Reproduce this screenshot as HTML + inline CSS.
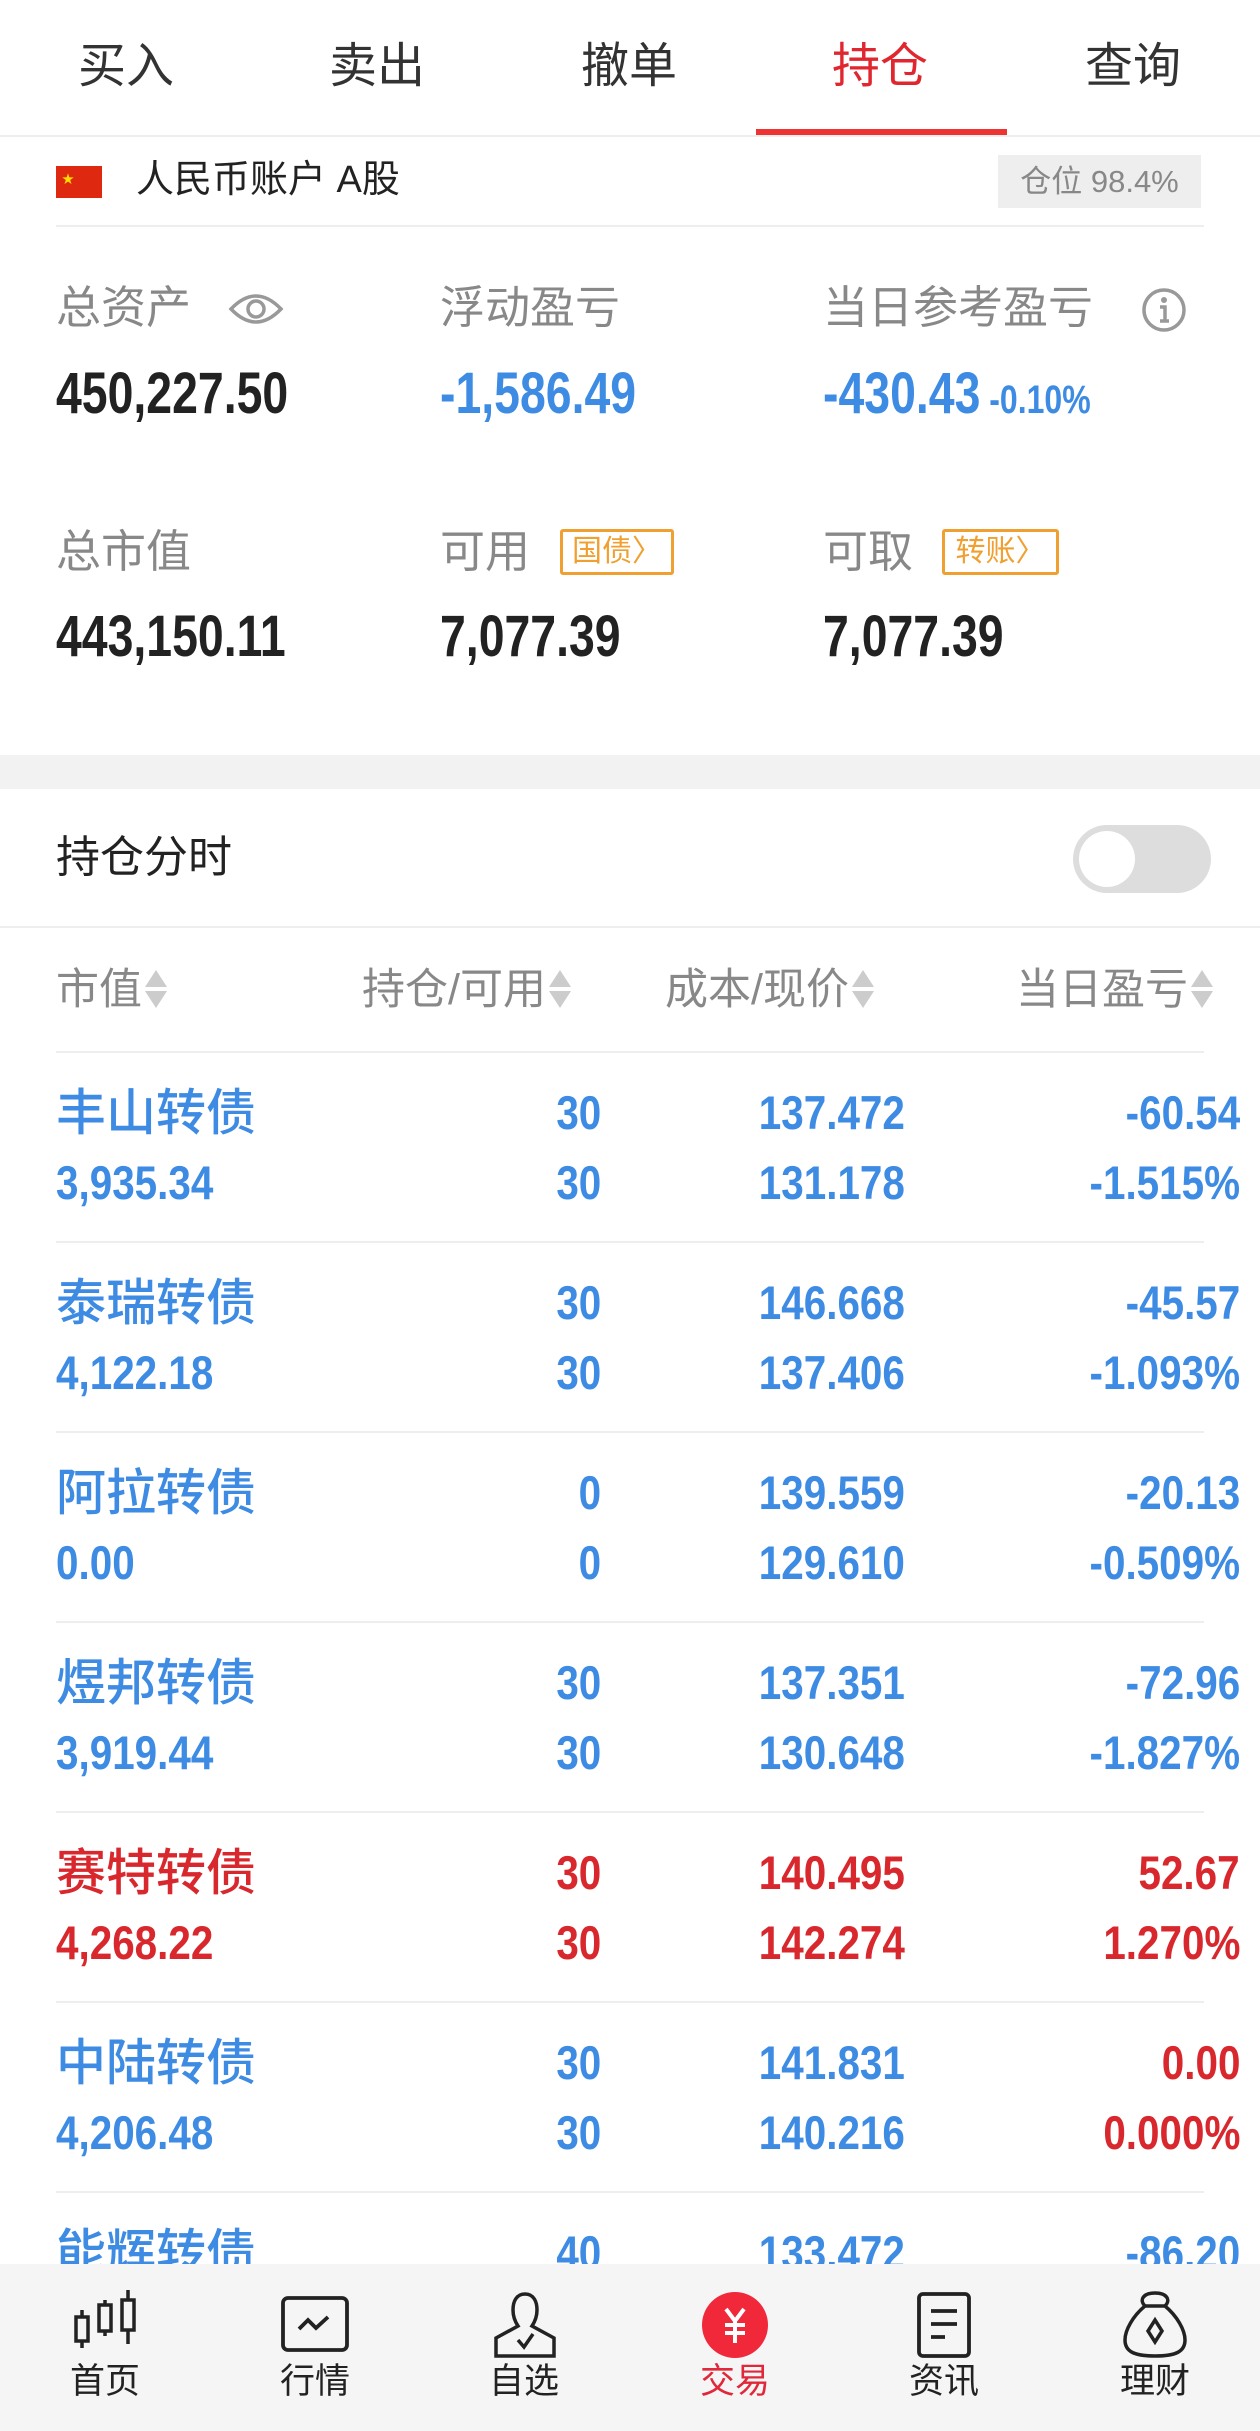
<!DOCTYPE html>
<html><head><meta charset="utf-8"><style>
*{margin:0;padding:0;box-sizing:border-box}
body{width:1260px;height:2431px;position:relative;overflow:hidden;background:#fff;font-family:"Liberation Sans","Noto Sans CJK SC",sans-serif;}
.a{position:absolute;white-space:nowrap}
.tab{top:36px;font-size:48px;color:#333;width:200px;text-align:center;line-height:62px}
.lbl{font-size:45px;color:#888;line-height:60px}
.val{font-size:58px;color:#222;line-height:70px;font-weight:bold;transform:scaleX(0.8);transform-origin:left}
.bl{color:#3d8be3}.rd{color:#d8282e}
.n{font-size:47px;line-height:60px;font-weight:bold;transform:scaleX(0.86);transform-origin:left}
.r{text-align:right;transform-origin:right}
.sep{position:absolute;left:56px;width:1148px;height:2px;background:#eee}
.badge{position:absolute;border:3px solid #f0a030;color:#f0a030;font-size:30px;line-height:40px;text-align:center;border-radius:3px}
.th{font-size:43px;color:#888;line-height:60px;top:960px}
.th svg{vertical-align:-6px;margin-left:2px}
.nav{font-size:35px;color:#222;top:2358px;width:120px;text-align:center;line-height:48px}
.nm{font-size:50px;line-height:60px;font-weight:500}
</style></head><body>
<div class="a tab" style="left:26px">买入</div>
<div class="a tab" style="left:277px">卖出</div>
<div class="a tab" style="left:529px">撤单</div>
<div class="a tab" style="left:780px;color:#e0262f">持仓</div>
<div class="a tab" style="left:1033px">查询</div>
<div class="a" style="left:756px;top:129px;width:251px;height:6px;background:#e33"></div>
<div class="a" style="left:0;top:135px;width:1260px;height:2px;background:#eee"></div>

<div class="a" style="left:56px;top:166px;width:46px;height:32px;background:#de2910"><span style="position:absolute;left:6px;top:4px;color:#ffde00;font-size:12px">★</span></div>
<div class="a" style="left:136px;top:154px;font-size:38px;color:#222;line-height:52px">人民币账户 A股</div>
<div class="a" style="left:998px;top:155px;width:203px;height:53px;background:#eee;color:#888;font-size:31px;line-height:53px;text-align:center">仓位 98.4%</div>
<div class="sep" style="top:225px"></div>

<div class="a lbl" style="left:56px;top:278px">总资产</div>
<svg class="a" style="left:228px;top:289px" width="56" height="40" viewBox="0 0 56 40"><path d="M3 20Q28-6 53 20Q28 46 3 20Z" fill="none" stroke="#999" stroke-width="3.5"/><circle cx="28" cy="20" r="8" fill="none" stroke="#999" stroke-width="3.5"/></svg>
<div class="a lbl" style="left:440px;top:278px">浮动盈亏</div>
<div class="a lbl" style="left:823px;top:278px">当日参考盈亏</div>
<svg class="a" style="left:1141px;top:287px" width="46" height="46" viewBox="0 0 46 46"><circle cx="23" cy="23" r="20" fill="none" stroke="#999" stroke-width="3.5"/><circle cx="23" cy="13" r="3" fill="#999"/><path d="M19 20h5v14M19 34h9" stroke="#999" stroke-width="3.5" fill="none"/></svg>
<div class="a val" style="left:56px;top:359px">450,227.50</div>
<div class="a val bl" style="left:440px;top:359px">-1,586.49</div>
<div class="a val bl" style="left:823px;top:359px">-430.43<span style="font-size:40px"> -0.10%</span></div>

<div class="a lbl" style="left:56px;top:522px">总市值</div>
<div class="a lbl" style="left:440px;top:522px">可用</div>
<div class="badge" style="left:560px;top:529px;width:114px;height:46px">国债〉</div>
<div class="a lbl" style="left:823px;top:522px">可取</div>
<div class="badge" style="left:942px;top:529px;width:117px;height:46px">转账〉</div>
<div class="a val" style="left:56px;top:602px">443,150.11</div>
<div class="a val" style="left:440px;top:602px">7,077.39</div>
<div class="a val" style="left:823px;top:602px">7,077.39</div>

<div class="a" style="left:0;top:755px;width:1260px;height:34px;background:#f2f2f2"></div>
<div class="a" style="left:56px;top:828px;font-size:44px;color:#222;line-height:60px">持仓分时</div>
<div class="a" style="left:1073px;top:825px;width:138px;height:68px;border-radius:34px;background:#ddd"><div style="position:absolute;left:6px;top:6px;width:56px;height:56px;border-radius:50%;background:#fff"></div></div>
<div class="a" style="left:0;top:926px;width:1260px;height:2px;background:#eee"></div>

<div class="a th" style="left:56px">市值<svg width="24" height="42" viewBox="0 0 24 42"><path d="M12 2L23 19H1zM12 40L23 23H1z" fill="#ccc"/></svg></div>
<div class="a th" style="left:362px">持仓/可用<svg width="24" height="42" viewBox="0 0 24 42"><path d="M12 2L23 19H1zM12 40L23 23H1z" fill="#ccc"/></svg></div>
<div class="a th" style="left:665px">成本/现价<svg width="24" height="42" viewBox="0 0 24 42"><path d="M12 2L23 19H1zM12 40L23 23H1z" fill="#ccc"/></svg></div>
<div class="a th" style="left:1016px">当日盈亏<svg width="24" height="42" viewBox="0 0 24 42"><path d="M12 2L23 19H1zM12 40L23 23H1z" fill="#ccc"/></svg></div>
<div class="sep" style="top:1051px"></div>

<div class="a bl nm" style="left:56px;top:1083px">丰山转债</div>
<div class="a n bl" style="left:56px;top:1153px">3,935.34</div>
<div class="a n bl r" style="right:659px;top:1083px">30</div><div class="a n bl r" style="right:659px;top:1153px">30</div>
<div class="a n bl r" style="right:355px;top:1083px">137.472</div><div class="a n bl r" style="right:355px;top:1153px">131.178</div>
<div class="a n bl r" style="right:20px;top:1083px">-60.54</div><div class="a n bl r" style="right:20px;top:1153px">-1.515%</div>
<div class="sep" style="top:1241px"></div>

<div class="a bl nm" style="left:56px;top:1273px">泰瑞转债</div>
<div class="a n bl" style="left:56px;top:1343px">4,122.18</div>
<div class="a n bl r" style="right:659px;top:1273px">30</div><div class="a n bl r" style="right:659px;top:1343px">30</div>
<div class="a n bl r" style="right:355px;top:1273px">146.668</div><div class="a n bl r" style="right:355px;top:1343px">137.406</div>
<div class="a n bl r" style="right:20px;top:1273px">-45.57</div><div class="a n bl r" style="right:20px;top:1343px">-1.093%</div>
<div class="sep" style="top:1431px"></div>

<div class="a bl nm" style="left:56px;top:1463px">阿拉转债</div>
<div class="a n bl" style="left:56px;top:1533px">0.00</div>
<div class="a n bl r" style="right:659px;top:1463px">0</div><div class="a n bl r" style="right:659px;top:1533px">0</div>
<div class="a n bl r" style="right:355px;top:1463px">139.559</div><div class="a n bl r" style="right:355px;top:1533px">129.610</div>
<div class="a n bl r" style="right:20px;top:1463px">-20.13</div><div class="a n bl r" style="right:20px;top:1533px">-0.509%</div>
<div class="sep" style="top:1621px"></div>

<div class="a bl nm" style="left:56px;top:1653px">煜邦转债</div>
<div class="a n bl" style="left:56px;top:1723px">3,919.44</div>
<div class="a n bl r" style="right:659px;top:1653px">30</div><div class="a n bl r" style="right:659px;top:1723px">30</div>
<div class="a n bl r" style="right:355px;top:1653px">137.351</div><div class="a n bl r" style="right:355px;top:1723px">130.648</div>
<div class="a n bl r" style="right:20px;top:1653px">-72.96</div><div class="a n bl r" style="right:20px;top:1723px">-1.827%</div>
<div class="sep" style="top:1811px"></div>

<div class="a rd nm" style="left:56px;top:1843px">赛特转债</div>
<div class="a n rd" style="left:56px;top:1913px">4,268.22</div>
<div class="a n rd r" style="right:659px;top:1843px">30</div><div class="a n rd r" style="right:659px;top:1913px">30</div>
<div class="a n rd r" style="right:355px;top:1843px">140.495</div><div class="a n rd r" style="right:355px;top:1913px">142.274</div>
<div class="a n rd r" style="right:20px;top:1843px">52.67</div><div class="a n rd r" style="right:20px;top:1913px">1.270%</div>
<div class="sep" style="top:2001px"></div>

<div class="a bl nm" style="left:56px;top:2033px">中陆转债</div>
<div class="a n bl" style="left:56px;top:2103px">4,206.48</div>
<div class="a n bl r" style="right:659px;top:2033px">30</div><div class="a n bl r" style="right:659px;top:2103px">30</div>
<div class="a n bl r" style="right:355px;top:2033px">141.831</div><div class="a n bl r" style="right:355px;top:2103px">140.216</div>
<div class="a n rd r" style="right:20px;top:2033px">0.00</div><div class="a n rd r" style="right:20px;top:2103px">0.000%</div>
<div class="sep" style="top:2191px"></div>

<div class="a bl nm" style="left:56px;top:2223px">能辉转债</div>
<div class="a n bl r" style="right:659px;top:2223px">40</div>
<div class="a n bl r" style="right:355px;top:2223px">133.472</div>
<div class="a n bl r" style="right:20px;top:2223px">-86.20</div>

<div class="a" style="left:0;top:2264px;width:1260px;height:167px;background:#f5f5f5"></div>
<svg class="a" style="left:70px;top:2290px" width="70" height="66" viewBox="0 0 70 66" fill="none" stroke="#222" stroke-width="3.5"><path d="M12 20v38M35 10v36M58 0v54"/><rect x="6" y="27" width="12" height="24" fill="#f5f5f5"/><rect x="29" y="15" width="12" height="26" fill="#f5f5f5"/><rect x="52" y="10" width="12" height="30" fill="#f5f5f5"/></svg>
<svg class="a" style="left:280px;top:2295px" width="70" height="60" viewBox="0 0 70 60" fill="none" stroke="#222" stroke-width="3.8"><rect x="3" y="3" width="64" height="52" rx="5"/><path d="M19 34l9-9 8 8 12-11"/></svg>
<svg class="a" style="left:490px;top:2291px" width="70" height="68" viewBox="0 0 70 68" fill="none" stroke="#222" stroke-width="3.5"><path d="M35 3c-9 0-12 8-12 16 0 7 3 13 5 16l-22 12v18h58V47L42 35c2-3 5-9 5-16 0-8-3-16-12-16z"/><path d="M28 49l6 7 9-13"/></svg>
<svg class="a" style="left:700px;top:2291px" width="70" height="68" viewBox="0 0 70 68"><ellipse cx="35" cy="34" rx="33" ry="33" fill="#f0283a"/><path d="M26 18l9 12 9-12M35 30v22M25 34h20M25 42h20" stroke="#fff" stroke-width="4" fill="none"/></svg>
<svg class="a" style="left:914px;top:2291px" width="60" height="68" viewBox="0 0 60 68" fill="none" stroke="#222" stroke-width="3.8"><rect x="5" y="3" width="50" height="62" rx="4"/><path d="M17 20h26M17 33h26M17 46h14"/></svg>
<svg class="a" style="left:1120px;top:2290px" width="70" height="70" viewBox="0 0 70 70" fill="none" stroke="#222" stroke-width="3.5"><path d="M25 16c-6-6-2-13 10-13s16 7 10 13"/><path d="M25 16h20c12 10 20 24 20 34 0 12-10 16-30 16S5 62 5 50c0-10 8-24 20-34z"/><path d="M35 30l7 11-7 11-7-11z"/></svg>
<div class="a nav" style="left:45px">首页</div>
<div class="a nav" style="left:255px">行情</div>
<div class="a nav" style="left:464px">自选</div>
<div class="a nav" style="left:675px;color:#e0283a">交易</div>
<div class="a nav" style="left:884px">资讯</div>
<div class="a nav" style="left:1095px">理财</div>
</body></html>
